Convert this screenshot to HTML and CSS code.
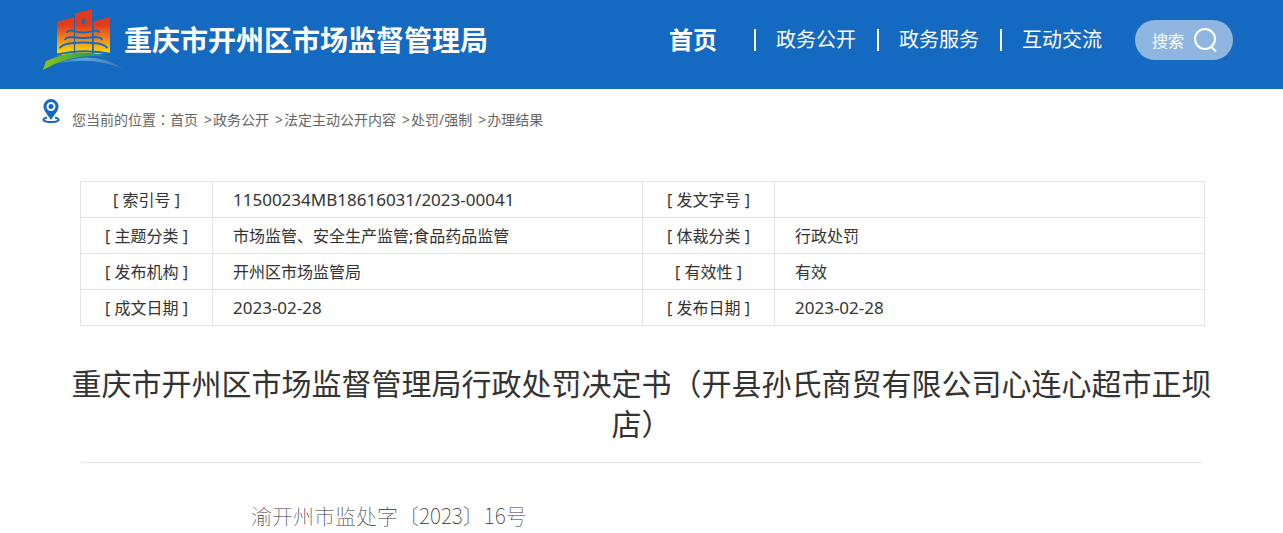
FILE: index.html
```html
<!DOCTYPE html>
<html lang="zh-CN">
<head>
  <meta charset="UTF-8" />
  <meta name="viewport" content="width=device-width, initial-scale=1.0" />
  <title>重庆市开州区市场监督管理局</title>
  <link rel="stylesheet" href="styles.css">
</head>
<body>

  <header class="header">
    <div class="wrap header-inner">
      <a class="logo" href="#">
        <svg class="logo-icon" viewBox="42 8 82 64" aria-hidden="true">
          <defs>
            <linearGradient id="tower" gradientUnits="userSpaceOnUse" x1="0" y1="25" x2="0" y2="54">
              <stop offset="0" stop-color="#e23b1b" />
              <stop offset="0.5" stop-color="#f08a1c" />
              <stop offset="1" stop-color="#ffe000" />
            </linearGradient>
            <linearGradient id="hill" x1="0" y1="0" x2="1" y2="0">
              <stop offset="0" stop-color="#8cc41e" />
              <stop offset="0.5" stop-color="#45a83c" />
              <stop offset="1" stop-color="#1a75a5" />
            </linearGradient>
            <linearGradient id="river" x1="0" y1="0" x2="1" y2="0">
              <stop offset="0" stop-color="#2f86d2" />
              <stop offset="0.4" stop-color="#5aa5e0" />
              <stop offset="1" stop-color="#4a70a8" />
            </linearGradient>
          </defs>
          <g fill="url(#tower)">
            <path d="M57 22 L74 17 V54 L57 55.500 Z" />
            <path d="M75 13.500 L92 9 V54 H75 Z" />
            <path d="M93.500 21.500 L110 17 V54 H93.500 Z" />
          </g>
          <ellipse cx="83.500" cy="21.500" rx="2" ry="3" fill="#1469c1" />
          <g fill="none" stroke="#1469c1" stroke-width="1.800" stroke-linecap="round">
            <path d="M67 32 Q68 30 74 31 Q83 34 93 31 Q98 30 99 32" />
            <path d="M65 39.500 Q66 37 73 37 Q83 39 94 37 Q101 37 102 39.500" />
            <path d="M60 47.500 Q64 43.500 73 43 Q83 42 94 43 Q103 43.500 107 47.500" />
            <path d="M74.500 28 V51 M93 28 V51" stroke-width="1.200" />
          </g>
          <path d="M55 55 Q84 48 111 54" fill="none" stroke="#1469c1" stroke-width="2" />
          <path d="M43 70 L46 61 Q78 46 114 58 Q76 51 43 70 Z" fill="url(#hill)" />
          <path d="M58 63.500 Q94 49 124 69.500 Q94 56 58 63.500 Z" fill="url(#river)" />
        </svg>
        <span class="logo-text">重庆市开州区市场监督管理局</span>
      </a>
      <nav class="nav">
        <a class="nav-link active" href="#">首页</a>
        <a class="nav-link" href="#">政务公开</a>
        <a class="nav-link" href="#">政务服务</a>
        <a class="nav-link" href="#">互动交流</a>
      </nav>
      <button class="search" type="button">
        搜索
        <svg class="search-icon" viewBox="0 0 24 26" aria-hidden="true">
          <circle cx="11" cy="12" r="10" />
          <path d="M17 19.500 L22 24.500" />
        </svg>
      </button>
    </div>
  </header>

  <main class="wrap">
    <div class="crumbs">
      <svg class="pin" viewBox="0 0 18 24" aria-hidden="true">
        <path class="pin-ring" d="M5 18.500 C-1 20 1 23 9 23 S19 20 13 18.500" />
        <path class="pin-body" fill-rule="evenodd" d="M9 0 A7.500 7.500 0 0 1 16.500 7.500 C16.500 12 12 16 9 21 C6 16 1.500 12 1.500 7.500 A7.500 7.500 0 0 1 9 0 Z M9 3 A4.500 4.500 0 1 0 9 12 A4.500 4.500 0 1 0 9 3 Z" />
        <circle class="pin-body" cx="9" cy="7.500" r="2.500" />
      </svg>
      <span>您当前的位置<span class="colon" lang="zh-TW">：</span></span>
      <a href="#">首页</a>
      <span class="gt">&gt;</span><a href="#">政务公开</a>
      <span class="gt">&gt;</span><a href="#">法定主动公开内容</a>
      <span class="gt">&gt;</span><a href="#">处罚/强制</a>
      <span class="gt">&gt;</span><a href="#">办理结果</a>
    </div>

    <table class="info">
      <tr>
        <th scope="row">[ 索引号 ]</th>
        <td class="num">11500234MB18616031/2023-00041</td>
        <th scope="row">[ 发文字号 ]</th>
        <td></td>
      </tr>
      <tr>
        <th scope="row">[ 主题分类 ]</th>
        <td>市场监管、安全生产监管;食品药品监管</td>
        <th scope="row">[ 体裁分类 ]</th>
        <td>行政处罚</td>
      </tr>
      <tr>
        <th scope="row">[ 发布机构 ]</th>
        <td>开州区市场监管局</td>
        <th scope="row">[ 有效性 ]</th>
        <td>有效</td>
      </tr>
      <tr>
        <th scope="row">[ 成文日期 ]</th>
        <td class="num">2023-02-28</td>
        <th scope="row">[ 发布日期 ]</th>
        <td class="num">2023-02-28</td>
      </tr>
    </table>

    <article class="article">
      <h1>重庆市开州区市场监督管理局行政处罚决定书（开县孙氏商贸有限公司心连心超市正坝店）</h1>
      <p class="doc-no">渝开州市监处字〔2023〕16号</p>
    </article>
  </main>

</body>
</html>
```

FILE: styles.css
```css
* {
  box-sizing: border-box;
}

body {
  margin: 0;
  background: #fff;
  color: #333;
  font-family: "Noto Sans", "Noto Sans CJK SC", sans-serif;
  font-size: 16px;
}

a {
  color: inherit;
  text-decoration: none;
}

.wrap {
  max-width: 1199px;
  margin: 0 auto;
}

/* header */
.header {
  background: #1469c1;
  color: #fff;
}

.header-inner {
  display: flex;
  align-items: center;
  height: 89px;
  padding-right: 8px;
  padding-bottom: 10px;
}

.logo {
  display: flex;
  align-items: center;
}

.logo-icon {
  width: 82px;
  height: 64px;
}

.logo-text {
  font-size: 28px;
  font-weight: bold;
  line-height: 40px;
}

.nav {
  display: flex;
  align-items: center;
  margin-left: auto;
}

.nav-link {
  padding: 0 21px 0 20px;
  border-left: 2px solid #fff;
  font-size: 20px;
  line-height: 22px;
}

.nav-link.active {
  padding: 0 37px 0 0;
  border-left: none;
  font-size: 24px;
  font-weight: bold;
}

.nav-link:last-child {
  padding-right: 33px;
}

.search {
  display: flex;
  align-items: center;
  justify-content: space-between;
  width: 98px;
  height: 40px;
  padding: 0 15px 0 17px;
  border: none;
  border-radius: 20px;
  background: #8fb6e1;
  color: #fff;
  font-family: inherit;
  font-size: 16px;
  cursor: pointer;
}

.search-icon {
  width: 24px;
  height: 26px;
  fill: none;
  stroke: #fff;
  stroke-width: 2;
}

/* breadcrumb */
.crumbs {
  display: flex;
  align-items: center;
  height: 60px;
  color: #666;
  font-size: 14px;
}

.pin {
  width: 18px;
  height: 24px;
  margin-right: 12px;
  margin-bottom: 16px;
}

.pin-body {
  fill: #1469c1;
}

.pin-ring {
  fill: none;
  stroke: #1469c1;
  stroke-width: 2;
}

.colon {
  font-family: "Noto Sans CJK TC", sans-serif;
}

.gt {
  margin: 0 1px 0 6px;
}

/* info table */
.info {
  width: calc(100% - 74px);
  margin: 32px 36px 0 38px;
  border-collapse: collapse;
  table-layout: fixed;
}

.info th,
.info td {
  height: 36px;
  padding: 0;
  border: 1px solid #e3e3e3;
  font-weight: normal;
  line-height: 24px;
}

.info th {
  width: 132px;
}

.info td {
  padding-left: 20px;
}

.info .num {
  font-size: 17px;
}

/* article */
.article {
  padding: 38px 29px 0;
}

.article h1 {
  margin: 0;
  font-size: 30px;
  font-weight: normal;
  line-height: 40px;
  text-align: center;
}

.doc-no {
  margin: 18px 10px 0;
  padding: 36px 0 0 170px;
  border-top: 1px solid #e3e3e3;
  font-family: "Noto Sans CJK SC", sans-serif;
  font-size: 21px;
  font-weight: 100;
  line-height: 32px;
}
```
